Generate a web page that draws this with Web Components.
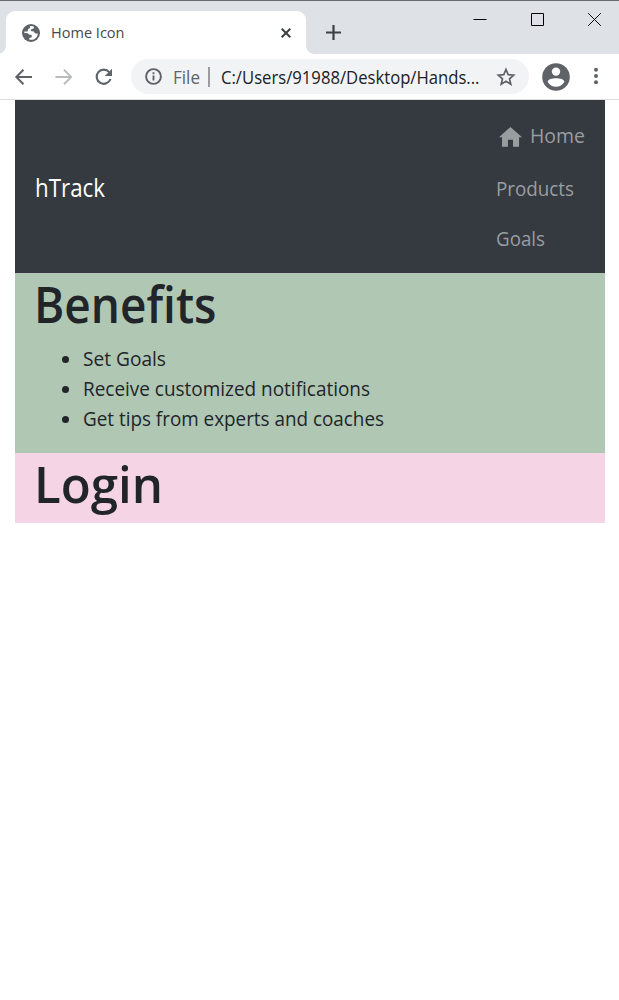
<!DOCTYPE html>
<html lang="en">
<head>
<meta charset="utf-8">
<title>Home Icon</title>
<style>
html,body{margin:0;height:100%;background:#fff}
body{font-family:"Open Sans","Noto Sans",sans-serif;color:#212529;overflow:hidden}
</style>
</head>
<body>
<browser-window></browser-window>
<script>
const define = (name, html) => customElements.define(name, class extends HTMLElement {
  constructor(){ super(); this.attachShadow({mode:'open'}).innerHTML = html; }
});

/* A single line of text condensed or expanded to the given width. */
customElements.define('fit-text', class extends HTMLElement {
  constructor(){
    super();
    this.attachShadow({mode:'open'}).innerHTML = '<style>:host{display:inline-block;white-space:nowrap;flex:none;font-variant-ligatures:none}span{display:inline-block;transform-origin:0 50%}</style><span><slot></slot></span>';
  }
  connectedCallback(){
    const s = this.shadowRoot.querySelector('span');
    const natural = s.getBoundingClientRect().width;
    const w = +this.getAttribute('w');
    if (natural) {
      s.style.transform = 'scaleX(' + w / natural + ')';
      this.style.width = w + 'px';
    }
  }
});

define('tab-strip', `<style>
:host{display:flex;height:54px;box-sizing:border-box;background:#dee1e6;border-top:1px solid #6a6c70;padding:10px 0 0 6px}
svg{display:block;flex:none}
.tab{position:relative;width:300px;height:43px;box-sizing:border-box;background:#fff;border-radius:9px 9px 0 0;display:flex;align-items:center;padding:0 14px 0 16px}
.tab:before,.tab:after{content:"";position:absolute;bottom:0;width:8px;height:8px}
.tab:before{left:-8px;background:radial-gradient(circle at 0 0,transparent 7.5px,#fff 8px)}
.tab:after{right:-8px;background:radial-gradient(circle at 100% 0,transparent 7.5px,#fff 8px)}
.title{font-size:14.8px;line-height:20px;color:#45494d;margin:-1px 0 0 11px;flex:1}
.plus{margin:14px 0 0 20px}
.win{display:flex;margin-left:auto;padding-right:18px;gap:43px}
</style>
<div class="tab">
<svg width="18" height="18" viewBox="0 0 18 18"><circle cx="9" cy="9" r="9" fill="#5f6368"/><path d="M8 2.1Q10.5 1.8 12 2.8L11.6 4.4 9.3 5.2 8.7 7.1 11.8 7.4 13 9.6 15.8 9.4Q15.4 14.4 10.6 15.8L7.4 15.7 7.2 14 9.8 13.3 9.6 11 7 10.6 5.9 9.2 2.2 8.9 2.4 7.6 5.6 7.5 6.2 5 8 4Z" fill="#fff"/></svg>
<div class="title"><fit-text w="73.5">Home Icon</fit-text></div>
<svg width="12" height="12" viewBox="0 0 12 12"><path d="M1.7 1.7l8.6 8.6M10.3 1.7L1.7 10.3" stroke="#3c4043" stroke-width="2"/></svg>
</div>
<svg class="plus" width="15" height="15" viewBox="0 0 15 15"><path d="M7.5 0v15M0 7.5h15" stroke="#3c4043" stroke-width="2.2"/></svg>
<div class="win">
<svg width="14" height="17" viewBox="0 0 14 17"><path d="M.5 8.5h13" stroke="#000"/></svg>
<svg width="14" height="17" viewBox="0 0 14 17"><path d="M1.5 2.5h12v12h-12z" fill="none" stroke="#000"/></svg>
<svg width="14" height="17" viewBox="0 0 14 17"><path d="M1.2 2.2l12.6 12.6M13.8 2.2L1.2 14.8" stroke="#000"/></svg>
</div>`);

define('tool-bar', `<style>
:host{display:flex;align-items:center;height:46px;box-sizing:border-box;border-bottom:1px solid #dcdee0;background:#fff;padding:0 17px 0 14px}
svg{display:block;flex:none}
.fwd{margin-left:22px}.re{margin-left:23px}
.omni{display:flex;align-items:center;width:398px;flex:none;height:35px;border-radius:18px;background:#f1f3f4;margin-left:18px;box-sizing:border-box;padding:0 13px 0 14px;font-size:17.6px;line-height:24px;color:#202124}
.file{color:#5f6368;margin-left:11px;width:27px}
.bar{width:2px;height:20px;background:#999da1;margin:0 11px 0 8px}
.star{margin-left:auto}
</style>
<svg width="18" height="16" viewBox="0 0 18 16"><path d="M18 8H2.5M9.5 .8L2.3 8 9.5 15.2" fill="none" stroke="#5f6368" stroke-width="2"/></svg>
<svg class="fwd" width="18" height="16" viewBox="0 0 18 16"><path d="M1.5 8H17M10 .8L17.2 8 10 15.2" fill="none" stroke="#babcbe" stroke-width="2"/></svg>
<svg class="re" width="18" height="18" viewBox="0 0 18 18"><path d="M14.2 4.1A7.1 7.1 0 1 0 15.5 11" fill="none" stroke="#5f6368" stroke-width="2.1"/><path d="M17 .8V8H9.8Z" fill="#5f6368"/></svg>
<div class="omni">
<svg width="17" height="17" viewBox="0 0 17 17"><circle cx="8.5" cy="8.5" r="7.4" fill="none" stroke="#5f6368" stroke-width="1.9"/><path d="M8.5 7.5v5M8.5 4.3v1.9" stroke="#5f6368" stroke-width="1.9"/></svg>
<div class="file"><fit-text w="27">File</fit-text></div><div class="bar"></div>
<fit-text w="258.5">C:/Users/91988/Desktop/Hands...</fit-text>
<svg class="star" width="20" height="20" viewBox="0 0 20 20"><path d="M10 2.5L12.2 7.6 17.7 8.1 13.5 11.8 14.8 17.2 10 14.3 5.2 17.2 6.5 11.8 2.3 8.1 7.8 7.6Z" fill="none" stroke="#5f6368" stroke-width="1.7"/></svg>
</div>
<svg width="28" height="28" viewBox="0 0 28 28" style="margin-left:13px"><circle cx="14" cy="14" r="13.8" fill="#5f6368"/><circle cx="14" cy="8.6" r="4.2" fill="#fff"/><path d="M5.6 18.8C6.5 14.2 21.5 14.2 22.4 18.8Q19.5 23.8 14 23.8T5.6 18.8Z" fill="#fff"/></svg>
<svg width="4" height="18" viewBox="0 0 4 18" style="margin-left:auto;margin-right:4px;margin-top:-1px"><g fill="#5f6368"><circle cx="2" cy="2.8" r="2"/><circle cx="2" cy="9" r="2"/><circle cx="2" cy="15.2" r="2"/></g></svg>`);

define('site-nav', `<style>
:host{display:flex;justify-content:space-between;align-items:center;height:173px;box-sizing:border-box;background:#343a40;padding:11px 20px 9px 20px}
.brand{color:#fff;font-size:25px;line-height:38px;margin:-2px 0 0 0}
nav{width:90px;color:#9a9da0;font-size:19.6px;line-height:30px}
.i{display:flex;align-items:center;height:50px;padding-left:1px}
.home{height:53px;padding:0 0 0 4px}
.home svg{margin-top:-1px}
.home fit-text{margin:-4px 0 0 8px}
</style>
<div class="brand"><fit-text w="70">hTrack</fit-text></div>
<nav>
<div class="i home"><svg width="25" height="22" viewBox="0 0 25 22"><path d="M12.5 0L25 11.4H21.8V21.6H15.2V14H9.7V21.6H3.3V11.4H0Z" fill="#9a9da0"/></svg><fit-text w="55">Home</fit-text></div>
<div class="i"><fit-text w="78">Products</fit-text></div>
<div class="i"><fit-text w="49">Goals</fit-text></div>
</nav>`);

define('page-section', `<style>
:host{display:block;box-sizing:border-box;padding:1px 20px 0}
.h{font-size:50px;font-weight:600;line-height:60px;margin-bottom:10px;height:60px;margin-left:-1.5px}
</style><div class="h"><slot name="heading"></slot></div><slot></slot>`);

define('benefit-list', `<style>
:host{display:block;margin-left:1.5px}
ul{margin:0 0 0 -1.5px;padding:0 0 0 48px;list-style:none;font-size:19.4px;line-height:30px}
li{display:flex;align-items:center;height:30px}
li:before{content:"";width:7px;height:7px;border-radius:50%;background:#212529;margin:0 14px 0 -21px}
</style>
<ul><li><fit-text w="83">Set Goals</fit-text></li>
<li><fit-text w="287">Receive customized notifications</fit-text></li>
<li><fit-text w="301">Get tips from experts and coaches</fit-text></li></ul>`);

define('browser-window', `<style>
:host{display:block;width:619px;height:1000px;background:#fff}
main{margin:0 14px 0 15px}
.b{height:180px;background:#b0c7b4}
.l{height:70px;background:#f5d5e5}
</style>
<tab-strip></tab-strip><tool-bar></tool-bar>
<main><site-nav></site-nav>
<page-section class="b"><fit-text slot="heading" w="182.5">Benefits</fit-text><benefit-list></benefit-list></page-section>
<page-section class="l"><fit-text slot="heading" w="129">Login</fit-text></page-section></main>`);
</script>
</body>
</html>
